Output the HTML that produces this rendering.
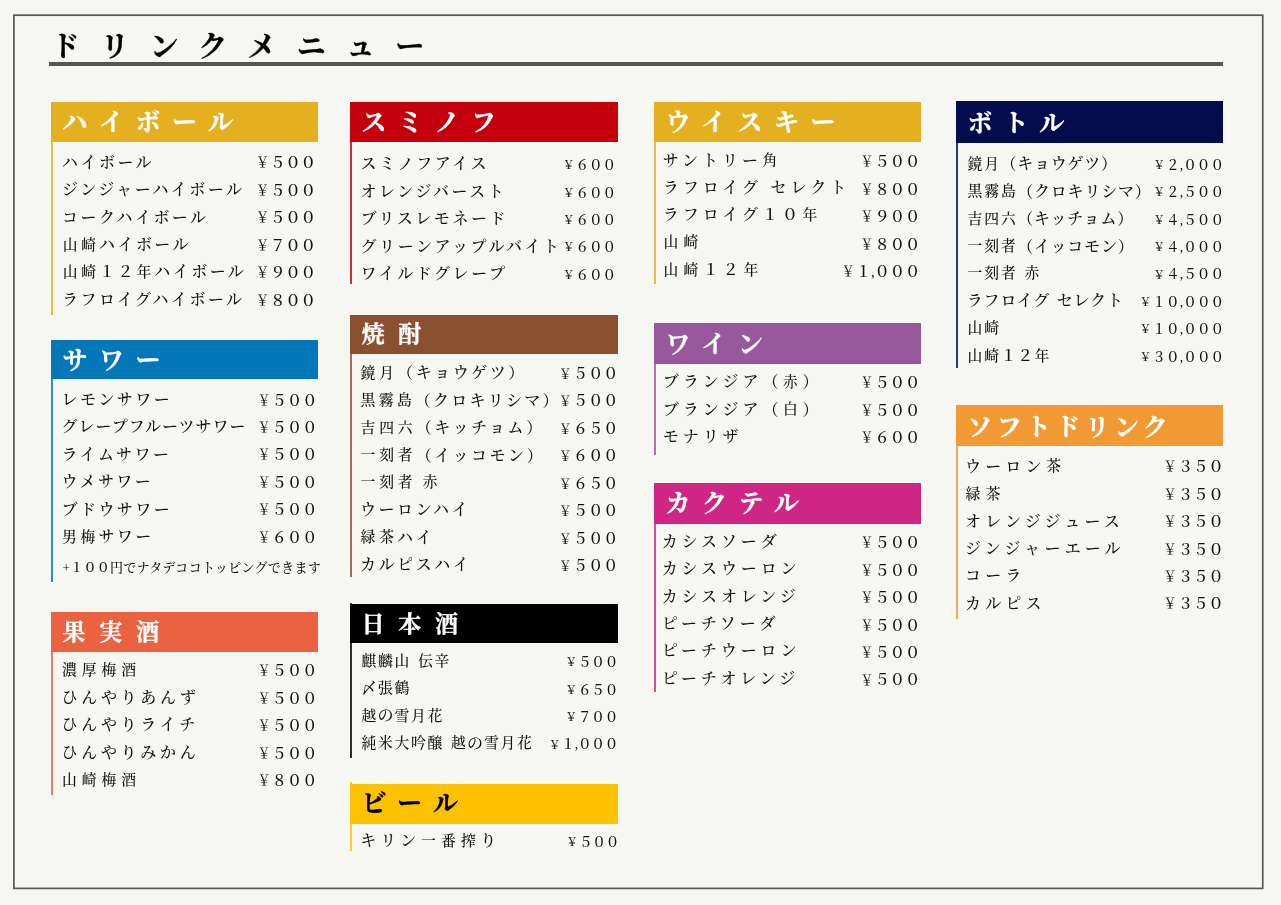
<!DOCTYPE html>
<html lang="ja"><head><meta charset="utf-8"><title>ドリンクメニュー</title>
<style>
html,body{margin:0;padding:0;}
body{width:1281px;height:905px;background:#f6f6f2;position:relative;overflow:hidden;font-family:"Liberation Serif", "Noto Serif CJK JP", "Noto Serif CJK SC", serif;color:#111;}
.frame{position:absolute;left:0;top:0;}
.title{position:absolute;left:51px;top:25px;font-size:29px;font-weight:700;letter-spacing:20.3px;line-height:44px;white-space:nowrap;color:#000;-webkit-text-stroke:0.3px #000;will-change:transform;}
.bar{position:absolute;left:48.5px;top:62px;width:1174.7px;height:4px;background:#575552;}
.sec{position:absolute;will-change:transform;}
.hd{position:absolute;left:0;top:0;color:#fff;font-weight:700;-webkit-text-stroke:0.35px currentColor;white-space:nowrap;box-sizing:border-box;}
.hd span{position:relative;}
.lb{position:absolute;left:0;width:2px;opacity:.82;}
.r{position:absolute;left:0;height:24px;line-height:24px;white-space:nowrap;}
.n{position:absolute;top:0;font-weight:500;}
.p{position:absolute;top:0.7px;text-align:right;font-weight:500;}
.n b{font-weight:inherit;position:relative;top:-0.5px;}
.p i{font-style:normal;display:inline-block;font-size:0.87em;width:1.1494em;text-align:center;position:relative;top:-0.075em;}
.note{position:absolute;left:11.5px;font-size:13px;letter-spacing:0.3px;white-space:nowrap;line-height:20px;font-weight:500;}
</style></head><body>
<svg class="frame" width="1281" height="905" viewBox="0 0 1281 905"><rect x="13.9" y="15.2" width="1248.85" height="873.2" fill="none" stroke="#5a5856" stroke-width="1.7"/></svg>
<div class="title">ドリンクメニュー</div>
<div class="bar"></div>

<div class="sec" style="left:51px;top:102px;width:267px;">
<div class="lb" style="top:0px;height:212.5px;background:#e5b020;"></div>
<div class="hd" style="width:267px;height:40px;line-height:40.0px;background:#e5b020;font-size:25px;letter-spacing:11.5px;padding-left:11.5px;"><span style="top:0.80px">ハイボール</span></div>
<div class="r" style="top:48.80px;width:267px;"><span class="n" style="left:11.1px;font-size:16px;letter-spacing:2.45px;">ハイボール</span><span class="p" style="top:0.70px;right:2.34px;font-size:15.6px;letter-spacing:-0.4px;"><i>￥</i>５００</span></div>
<div class="r" style="top:76.22px;width:267px;"><span class="n" style="left:11.1px;font-size:16px;letter-spacing:2.45px;">ジンジャーハイボール</span><span class="p" style="top:0.70px;right:2.34px;font-size:15.6px;letter-spacing:-0.4px;"><i>￥</i>５００</span></div>
<div class="r" style="top:103.64px;width:267px;"><span class="n" style="left:11.1px;font-size:16px;letter-spacing:2.45px;">コークハイボール</span><span class="p" style="top:0.70px;right:2.34px;font-size:15.6px;letter-spacing:-0.4px;"><i>￥</i>５００</span></div>
<div class="r" style="top:131.06px;width:267px;"><span class="n" style="left:11.1px;font-size:16px;letter-spacing:2.45px;"><b style="font-size:14.8px;letter-spacing:3.65px;margin:0 -0.60px 0 0.60px">山崎</b>ハイボール</span><span class="p" style="top:0.70px;right:2.34px;font-size:15.6px;letter-spacing:-0.4px;"><i>￥</i>７００</span></div>
<div class="r" style="top:158.48px;width:267px;"><span class="n" style="left:11.1px;font-size:16px;letter-spacing:2.45px;"><b style="font-size:14.8px;letter-spacing:3.65px;margin:0 -0.60px 0 0.60px">山崎</b>１２<b style="font-size:14.8px;letter-spacing:3.65px;margin:0 -0.60px 0 0.60px">年</b>ハイボール</span><span class="p" style="top:0.70px;right:2.34px;font-size:15.6px;letter-spacing:-0.4px;"><i>￥</i>９００</span></div>
<div class="r" style="top:185.90px;width:267px;"><span class="n" style="left:11.1px;font-size:16px;letter-spacing:2.45px;">ラフロイグハイボール</span><span class="p" style="top:0.70px;right:2.34px;font-size:15.6px;letter-spacing:-0.4px;"><i>￥</i>８００</span></div>
</div>
<div class="sec" style="left:51px;top:340px;width:267px;">
<div class="lb" style="top:0px;height:241.5px;background:#0477b8;"></div>
<div class="hd" style="width:267px;height:39px;line-height:39.0px;background:#0477b8;font-size:25px;letter-spacing:11.5px;padding-left:11.5px;"><span style="top:0.80px">サワー</span></div>
<div class="r" style="top:48.00px;width:267px;"><span class="n" style="left:10.5px;font-size:16px;letter-spacing:2.45px;">レモンサワー</span><span class="p" style="top:0.55px;right:0.63px;font-size:15.1px;letter-spacing:0.1px;"><i>￥</i>５００</span></div>
<div class="r" style="top:75.42px;width:267px;"><span class="n" style="left:10.5px;font-size:16px;letter-spacing:1.0px;">グレープフルーツサワー</span><span class="p" style="top:0.55px;right:0.63px;font-size:15.1px;letter-spacing:0.1px;"><i>￥</i>５００</span></div>
<div class="r" style="top:102.84px;width:267px;"><span class="n" style="left:10.5px;font-size:16px;letter-spacing:2.45px;">ライムサワー</span><span class="p" style="top:0.55px;right:0.63px;font-size:15.1px;letter-spacing:0.1px;"><i>￥</i>５００</span></div>
<div class="r" style="top:130.26px;width:267px;"><span class="n" style="left:10.5px;font-size:16px;letter-spacing:2.45px;">ウメサワー</span><span class="p" style="top:0.55px;right:0.63px;font-size:15.1px;letter-spacing:0.1px;"><i>￥</i>５００</span></div>
<div class="r" style="top:157.68px;width:267px;"><span class="n" style="left:10.5px;font-size:16px;letter-spacing:2.45px;">ブドウサワー</span><span class="p" style="top:0.55px;right:0.63px;font-size:15.1px;letter-spacing:0.1px;"><i>￥</i>５００</span></div>
<div class="r" style="top:185.10px;width:267px;"><span class="n" style="left:10.5px;font-size:16px;letter-spacing:2.45px;"><b style="font-size:14.8px;letter-spacing:3.65px;margin:0 -0.60px 0 0.60px">男梅</b>サワー</span><span class="p" style="top:0.55px;right:0.63px;font-size:15.1px;letter-spacing:0.1px;"><i>￥</i>６００</span></div>
<div class="note" style="top:218.1px;">+１００円でナタデココトッピングできます</div>
</div>
<div class="sec" style="left:51px;top:612.4px;width:267px;">
<div class="lb" style="top:0px;height:183.1px;background:#ea6240;"></div>
<div class="hd" style="width:267px;height:39.5px;line-height:39.5px;background:#ea6240;font-size:23px;letter-spacing:13.7px;padding-left:11.5px;"><span style="top:0.80px">果実酒</span></div>
<div class="r" style="top:46.50px;width:267px;"><span class="n" style="left:10.5px;font-size:16px;letter-spacing:3.7px;"><b style="font-size:14.8px;letter-spacing:4.90px;margin:0 -0.60px 0 0.60px">濃厚梅酒</b></span><span class="p" style="top:0.90px;right:0.63px;font-size:15.1px;letter-spacing:0.1px;"><i>￥</i>５００</span></div>
<div class="r" style="top:73.92px;width:267px;"><span class="n" style="left:10.5px;font-size:16px;letter-spacing:3.7px;">ひんやりあんず</span><span class="p" style="top:0.90px;right:0.63px;font-size:15.1px;letter-spacing:0.1px;"><i>￥</i>５００</span></div>
<div class="r" style="top:101.34px;width:267px;"><span class="n" style="left:10.5px;font-size:16px;letter-spacing:3.7px;">ひんやりライチ</span><span class="p" style="top:0.90px;right:0.63px;font-size:15.1px;letter-spacing:0.1px;"><i>￥</i>５００</span></div>
<div class="r" style="top:128.76px;width:267px;"><span class="n" style="left:10.5px;font-size:16px;letter-spacing:3.7px;">ひんやりみかん</span><span class="p" style="top:0.90px;right:0.63px;font-size:15.1px;letter-spacing:0.1px;"><i>￥</i>５００</span></div>
<div class="r" style="top:156.18px;width:267px;"><span class="n" style="left:10.5px;font-size:16px;letter-spacing:3.7px;"><b style="font-size:14.8px;letter-spacing:4.90px;margin:0 -0.60px 0 0.60px">山崎梅酒</b></span><span class="p" style="top:0.90px;right:0.63px;font-size:15.1px;letter-spacing:0.1px;"><i>￥</i>８００</span></div>
</div>
<div class="sec" style="left:350px;top:102px;width:268px;">
<div class="lb" style="top:0px;height:182.4px;background:#c5000c;"></div>
<div class="hd" style="width:268px;height:40px;line-height:40.0px;background:#c5000c;font-size:25px;letter-spacing:11.5px;padding-left:11.5px;"><span style="top:0.80px">スミノフ</span></div>
<div class="r" style="top:50.40px;width:268px;"><span class="n" style="left:10.5px;font-size:16px;letter-spacing:2.58px;">スミノフアイス</span><span class="p" style="top:1.70px;right:1.82px;font-size:13.6px;letter-spacing:0px;"><i>￥</i>６００</span></div>
<div class="r" style="top:77.82px;width:268px;"><span class="n" style="left:10.5px;font-size:16px;letter-spacing:2.58px;">オレンジバースト</span><span class="p" style="top:1.70px;right:1.82px;font-size:13.6px;letter-spacing:0px;"><i>￥</i>６００</span></div>
<div class="r" style="top:105.24px;width:268px;"><span class="n" style="left:10.5px;font-size:16px;letter-spacing:2.58px;">ブリスレモネード</span><span class="p" style="top:1.70px;right:1.82px;font-size:13.6px;letter-spacing:0px;"><i>￥</i>６００</span></div>
<div class="r" style="top:132.66px;width:268px;"><span class="n" style="left:10.5px;font-size:16px;letter-spacing:2.58px;">グリーンアップルバイト</span><span class="p" style="top:1.70px;right:1.82px;font-size:13.6px;letter-spacing:0px;"><i>￥</i>６００</span></div>
<div class="r" style="top:160.08px;width:268px;"><span class="n" style="left:10.5px;font-size:16px;letter-spacing:2.58px;">ワイルドグレープ</span><span class="p" style="top:1.70px;right:1.82px;font-size:13.6px;letter-spacing:0px;"><i>￥</i>６００</span></div>
</div>
<div class="sec" style="left:350px;top:314.5px;width:268px;">
<div class="lb" style="top:0px;height:261.7px;background:#8b5030;"></div>
<div class="hd" style="width:268px;height:39.2px;line-height:39.2px;background:#8b5030;font-size:23px;letter-spacing:13.7px;padding-left:11.5px;"><span style="top:0.10px">焼酎</span></div>
<div class="r" style="top:46.30px;width:268px;"><span class="n" style="left:10px;font-size:16px;letter-spacing:2.55px;"><b style="font-size:14.8px;letter-spacing:3.75px;margin:0 -0.60px 0 0.60px">鏡月</b>（キョウゲツ）</span><span class="p" style="top:0.70px;right:-0.55px;font-size:15.0px;letter-spacing:0.2px;"><i>￥</i>５００</span></div>
<div class="r" style="top:73.72px;width:268px;"><span class="n" style="left:10px;font-size:16px;letter-spacing:2.25px;"><b style="font-size:14.8px;letter-spacing:3.45px;margin:0 -0.60px 0 0.60px">黒霧島</b>（クロキリシマ）</span><span class="p" style="top:0.70px;right:-0.55px;font-size:15.0px;letter-spacing:0.2px;"><i>￥</i>５００</span></div>
<div class="r" style="top:101.14px;width:268px;"><span class="n" style="left:10px;font-size:16px;letter-spacing:2.55px;"><b style="font-size:14.8px;letter-spacing:3.75px;margin:0 -0.60px 0 0.60px">吉四六</b>（キッチョム）</span><span class="p" style="top:0.70px;right:-0.55px;font-size:15.0px;letter-spacing:0.2px;"><i>￥</i>６５０</span></div>
<div class="r" style="top:128.56px;width:268px;"><span class="n" style="left:10px;font-size:16px;letter-spacing:2.55px;"><b style="font-size:14.8px;letter-spacing:3.75px;margin:0 -0.60px 0 0.60px">一刻者</b>（イッコモン）</span><span class="p" style="top:0.70px;right:-0.55px;font-size:15.0px;letter-spacing:0.2px;"><i>￥</i>６００</span></div>
<div class="r" style="top:155.98px;width:268px;"><span class="n" style="left:10px;font-size:16px;letter-spacing:2.55px;"><b style="font-size:14.8px;letter-spacing:3.75px;margin:0 -0.60px 0 0.60px">一刻者</b> <b style="font-size:14.8px;letter-spacing:3.75px;margin:0 -0.60px 0 0.60px">赤</b></span><span class="p" style="top:0.70px;right:-0.55px;font-size:15.0px;letter-spacing:0.2px;"><i>￥</i>６５０</span></div>
<div class="r" style="top:183.40px;width:268px;"><span class="n" style="left:10px;font-size:16px;letter-spacing:2.55px;">ウーロンハイ</span><span class="p" style="top:0.70px;right:-0.55px;font-size:15.0px;letter-spacing:0.2px;"><i>￥</i>５００</span></div>
<div class="r" style="top:210.82px;width:268px;"><span class="n" style="left:10px;font-size:16px;letter-spacing:2.55px;"><b style="font-size:14.8px;letter-spacing:3.75px;margin:0 -0.60px 0 0.60px">緑茶</b>ハイ</span><span class="p" style="top:0.70px;right:-0.55px;font-size:15.0px;letter-spacing:0.2px;"><i>￥</i>５００</span></div>
<div class="r" style="top:238.24px;width:268px;"><span class="n" style="left:10px;font-size:16px;letter-spacing:2.55px;">カルピスハイ</span><span class="p" style="top:0.70px;right:-0.55px;font-size:15.0px;letter-spacing:0.2px;"><i>￥</i>５００</span></div>
</div>
<div class="sec" style="left:350px;top:603.5px;width:268px;">
<div class="lb" style="top:-1.5px;height:155.7px;background:#000000;"></div>
<div class="hd" style="width:268px;height:39px;line-height:39.0px;background:#000000;font-size:23px;letter-spacing:13.7px;padding-left:11.5px;"><span style="top:0.80px">日本酒</span></div>
<div class="r" style="top:45.40px;width:268px;"><span class="n" style="left:11px;font-size:16px;letter-spacing:0.5px;word-spacing:2.5px;"><b style="font-size:14.8px;letter-spacing:1.70px;margin:0 -0.60px 0 0.60px">麒麟山</b> <b style="font-size:14.8px;letter-spacing:1.70px;margin:0 -0.60px 0 0.60px">伝辛</b></span><span class="p" style="top:1.80px;right:-0.08px;font-size:13.6px;letter-spacing:-0.2px;"><i>￥</i>５００</span></div>
<div class="r" style="top:72.82px;width:268px;"><span class="n" style="left:11px;font-size:16px;letter-spacing:0.5px;"><b style="font-size:14.8px;letter-spacing:1.70px;margin:0 -0.60px 0 0.60px">〆張鶴</b></span><span class="p" style="top:1.80px;right:-0.08px;font-size:13.6px;letter-spacing:-0.2px;"><i>￥</i>６５０</span></div>
<div class="r" style="top:100.24px;width:268px;"><span class="n" style="left:11px;font-size:16px;letter-spacing:0.5px;"><b style="font-size:14.8px;letter-spacing:1.70px;margin:0 -0.60px 0 0.60px">越</b>の<b style="font-size:14.8px;letter-spacing:1.70px;margin:0 -0.60px 0 0.60px">雪月花</b></span><span class="p" style="top:1.80px;right:-0.08px;font-size:13.6px;letter-spacing:-0.2px;"><i>￥</i>７００</span></div>
<div class="r" style="top:127.66px;width:268px;"><span class="n" style="left:11px;font-size:16px;letter-spacing:0.5px;word-spacing:2.5px;"><b style="font-size:14.8px;letter-spacing:1.70px;margin:0 -0.60px 0 0.60px">純米大吟醸</b> <b style="font-size:14.8px;letter-spacing:1.70px;margin:0 -0.60px 0 0.60px">越</b>の<b style="font-size:14.8px;letter-spacing:1.70px;margin:0 -0.60px 0 0.60px">雪月花</b></span><span class="p" style="top:1.80px;right:-0.08px;font-size:13.6px;letter-spacing:-0.2px;"><i>￥</i>１,０００</span></div>
</div>
<div class="sec" style="left:350px;top:784.4px;width:268px;">
<div class="lb" style="top:-2.2px;height:69.2px;background:#fcc200;"></div>
<div class="hd" style="width:268px;height:39.5px;line-height:39.5px;background:#fcc200;font-size:25px;letter-spacing:11.5px;padding-left:11.5px;color:#000;"><span style="top:0.30px">ビール</span></div>
<div class="r" style="top:45.00px;width:268px;"><span class="n" style="left:10.3px;font-size:16px;letter-spacing:4.0px;">キリン<b style="font-size:14.8px;letter-spacing:5.20px;margin:0 -0.60px 0 0.60px">一番搾</b>り</span><span class="p" style="top:1.85px;right:-1.08px;font-size:13.6px;letter-spacing:-0.2px;"><i>￥</i>５００</span></div>
</div>
<div class="sec" style="left:653.5px;top:102px;width:267.2px;">
<div class="lb" style="top:0px;height:182.4px;background:#e5b020;"></div>
<div class="hd" style="width:267.2px;height:40px;line-height:40.0px;background:#e5b020;font-size:25px;letter-spacing:11.5px;padding-left:11.5px;"><span style="top:0.80px">ウイスキー</span></div>
<div class="r" style="top:46.60px;width:267.2px;"><span class="n" style="left:8.8px;font-size:16px;letter-spacing:4.0px;">サントリー<b style="font-size:14.8px;letter-spacing:5.20px;margin:0 -0.60px 0 0.60px">角</b></span><span class="p" style="top:1.70px;right:0.99px;font-size:15.3px;letter-spacing:-0.1px;"><i>￥</i>５００</span></div>
<div class="r" style="top:74.02px;width:267.2px;"><span class="n" style="left:8.8px;font-size:16px;letter-spacing:4.0px;word-spacing:0.5px;">ラフロイグ セレクト</span><span class="p" style="top:1.70px;right:0.99px;font-size:15.3px;letter-spacing:-0.1px;"><i>￥</i>８００</span></div>
<div class="r" style="top:101.44px;width:267.2px;"><span class="n" style="left:8.8px;font-size:16px;letter-spacing:4.0px;">ラフロイグ１０<b style="font-size:14.8px;letter-spacing:5.20px;margin:0 -0.60px 0 0.60px">年</b></span><span class="p" style="top:1.70px;right:0.99px;font-size:15.3px;letter-spacing:-0.1px;"><i>￥</i>９００</span></div>
<div class="r" style="top:128.86px;width:267.2px;"><span class="n" style="left:8.8px;font-size:16px;letter-spacing:4.0px;"><b style="font-size:14.8px;letter-spacing:5.20px;margin:0 -0.60px 0 0.60px">山崎</b></span><span class="p" style="top:1.70px;right:0.99px;font-size:15.3px;letter-spacing:-0.1px;"><i>￥</i>８００</span></div>
<div class="r" style="top:156.28px;width:267.2px;"><span class="n" style="left:8.8px;font-size:16px;letter-spacing:4.0px;"><b style="font-size:14.8px;letter-spacing:5.20px;margin:0 -0.60px 0 0.60px">山崎</b>１２<b style="font-size:14.8px;letter-spacing:5.20px;margin:0 -0.60px 0 0.60px">年</b></span><span class="p" style="top:1.70px;right:0.99px;font-size:15.3px;letter-spacing:-0.1px;"><i>￥</i>１,０００</span></div>
</div>
<div class="sec" style="left:653.5px;top:323px;width:267.2px;">
<div class="lb" style="top:0px;height:131.9px;background:#97589c;"></div>
<div class="hd" style="width:267.2px;height:41.2px;line-height:41.2px;background:#97589c;font-size:25px;letter-spacing:11.5px;padding-left:11.5px;"><span style="top:0.80px">ワイン</span></div>
<div class="r" style="top:47.20px;width:267.2px;"><span class="n" style="left:8.8px;font-size:16px;letter-spacing:4.0px;">ブランジア（<b style="font-size:14.8px;letter-spacing:5.20px;margin:0 -0.60px 0 0.60px">赤</b>）</span><span class="p" style="top:1.10px;right:0.99px;font-size:15.3px;letter-spacing:-0.1px;"><i>￥</i>５００</span></div>
<div class="r" style="top:74.62px;width:267.2px;"><span class="n" style="left:8.8px;font-size:16px;letter-spacing:4.0px;">ブランジア（<b style="font-size:14.8px;letter-spacing:5.20px;margin:0 -0.60px 0 0.60px">白</b>）</span><span class="p" style="top:1.10px;right:0.99px;font-size:15.3px;letter-spacing:-0.1px;"><i>￥</i>５００</span></div>
<div class="r" style="top:102.04px;width:267.2px;"><span class="n" style="left:8.8px;font-size:16px;letter-spacing:4.0px;">モナリザ</span><span class="p" style="top:1.10px;right:0.99px;font-size:15.3px;letter-spacing:-0.1px;"><i>￥</i>６００</span></div>
</div>
<div class="sec" style="left:653.5px;top:483px;width:267.2px;">
<div class="lb" style="top:0px;height:208.8px;background:#cf2585;"></div>
<div class="hd" style="width:267.2px;height:40.7px;line-height:40.7px;background:#cf2585;font-size:25px;letter-spacing:11.5px;padding-left:11.5px;"><span style="top:1.40px">カクテル</span></div>
<div class="r" style="top:46.70px;width:267.2px;"><span class="n" style="left:7.7px;font-size:16px;letter-spacing:3.9px;">カシスソーダ</span><span class="p" style="top:1.70px;right:0.99px;font-size:15.3px;letter-spacing:-0.1px;"><i>￥</i>５００</span></div>
<div class="r" style="top:74.12px;width:267.2px;"><span class="n" style="left:7.7px;font-size:16px;letter-spacing:3.9px;">カシスウーロン</span><span class="p" style="top:1.70px;right:0.99px;font-size:15.3px;letter-spacing:-0.1px;"><i>￥</i>５００</span></div>
<div class="r" style="top:101.54px;width:267.2px;"><span class="n" style="left:7.7px;font-size:16px;letter-spacing:3.9px;">カシスオレンジ</span><span class="p" style="top:1.70px;right:0.99px;font-size:15.3px;letter-spacing:-0.1px;"><i>￥</i>５００</span></div>
<div class="r" style="top:128.96px;width:267.2px;"><span class="n" style="left:7.7px;font-size:16px;letter-spacing:3.9px;">ピーチソーダ</span><span class="p" style="top:1.70px;right:0.99px;font-size:15.3px;letter-spacing:-0.1px;"><i>￥</i>５００</span></div>
<div class="r" style="top:156.38px;width:267.2px;"><span class="n" style="left:7.7px;font-size:16px;letter-spacing:3.9px;">ピーチウーロン</span><span class="p" style="top:1.70px;right:0.99px;font-size:15.3px;letter-spacing:-0.1px;"><i>￥</i>５００</span></div>
<div class="r" style="top:183.80px;width:267.2px;"><span class="n" style="left:7.7px;font-size:16px;letter-spacing:3.9px;">ピーチオレンジ</span><span class="p" style="top:1.70px;right:0.99px;font-size:15.3px;letter-spacing:-0.1px;"><i>￥</i>５００</span></div>
</div>
<div class="sec" style="left:956.2px;top:101.2px;width:266.8px;">
<div class="lb" style="top:0px;height:266.7px;background:#030d4d;"></div>
<div class="hd" style="width:266.8px;height:41.8px;line-height:41.8px;background:#030d4d;font-size:25px;letter-spacing:10.9px;padding-left:11.5px;"><span style="top:2.00px">ボトル</span></div>
<div class="r" style="top:51.30px;width:266.8px;"><span class="n" style="left:10.8px;font-size:16px;letter-spacing:0.8px;"><b style="font-size:14.8px;letter-spacing:2.00px;margin:0 -0.60px 0 0.60px">鏡月</b>（キョウゲツ）</span><span class="p" style="top:1.45px;right:-1.48px;font-size:13.6px;letter-spacing:0.1px;"><i>￥</i>２,０００</span></div>
<div class="r" style="top:78.72px;width:266.8px;"><span class="n" style="left:10.8px;font-size:16px;letter-spacing:0.8px;"><b style="font-size:14.8px;letter-spacing:2.00px;margin:0 -0.60px 0 0.60px">黒霧島</b>（クロキリシマ）</span><span class="p" style="top:1.45px;right:-1.48px;font-size:13.6px;letter-spacing:0.1px;"><i>￥</i>２,５００</span></div>
<div class="r" style="top:106.14px;width:266.8px;"><span class="n" style="left:10.8px;font-size:16px;letter-spacing:0.8px;"><b style="font-size:14.8px;letter-spacing:2.00px;margin:0 -0.60px 0 0.60px">吉四六</b>（キッチョム）</span><span class="p" style="top:1.45px;right:-1.48px;font-size:13.6px;letter-spacing:0.1px;"><i>￥</i>４,５００</span></div>
<div class="r" style="top:133.56px;width:266.8px;"><span class="n" style="left:10.8px;font-size:16px;letter-spacing:0.8px;"><b style="font-size:14.8px;letter-spacing:2.00px;margin:0 -0.60px 0 0.60px">一刻者</b>（イッコモン）</span><span class="p" style="top:1.45px;right:-1.48px;font-size:13.6px;letter-spacing:0.1px;"><i>￥</i>４,０００</span></div>
<div class="r" style="top:160.98px;width:266.8px;"><span class="n" style="left:10.8px;font-size:16px;letter-spacing:0.8px;word-spacing:2px;"><b style="font-size:14.8px;letter-spacing:2.00px;margin:0 -0.60px 0 0.60px">一刻者</b> <b style="font-size:14.8px;letter-spacing:2.00px;margin:0 -0.60px 0 0.60px">赤</b></span><span class="p" style="top:1.45px;right:-1.48px;font-size:13.6px;letter-spacing:0.1px;"><i>￥</i>４,５００</span></div>
<div class="r" style="top:188.40px;width:266.8px;"><span class="n" style="left:10.8px;font-size:16px;letter-spacing:0.8px;word-spacing:2px;">ラフロイグ セレクト</span><span class="p" style="top:1.45px;right:-1.48px;font-size:13.6px;letter-spacing:0.1px;"><i>￥</i>１０,０００</span></div>
<div class="r" style="top:215.82px;width:266.8px;"><span class="n" style="left:10.8px;font-size:16px;letter-spacing:0.8px;"><b style="font-size:14.8px;letter-spacing:2.00px;margin:0 -0.60px 0 0.60px">山崎</b></span><span class="p" style="top:1.45px;right:-1.48px;font-size:13.6px;letter-spacing:0.1px;"><i>￥</i>１０,０００</span></div>
<div class="r" style="top:243.24px;width:266.8px;"><span class="n" style="left:10.8px;font-size:16px;letter-spacing:0.8px;"><b style="font-size:14.8px;letter-spacing:2.00px;margin:0 -0.60px 0 0.60px">山崎</b>１２<b style="font-size:14.8px;letter-spacing:2.00px;margin:0 -0.60px 0 0.60px">年</b></span><span class="p" style="top:1.45px;right:-1.48px;font-size:13.6px;letter-spacing:0.1px;"><i>￥</i>３０,０００</span></div>
</div>
<div class="sec" style="left:956.2px;top:405.4px;width:266.8px;">
<div class="lb" style="top:0px;height:214.0px;background:#f19a33;"></div>
<div class="hd" style="width:266.8px;height:41px;line-height:41.0px;background:#f19a33;font-size:25px;letter-spacing:4.3px;padding-left:11.5px;"><span style="top:1.80px">ソフトドリンク</span></div>
<div class="r" style="top:49.70px;width:266.8px;"><span class="n" style="left:9px;font-size:16px;letter-spacing:4.15px;">ウーロン<b style="font-size:14.8px;letter-spacing:5.35px;margin:0 -0.60px 0 0.60px">茶</b></span><span class="p" style="top:0.70px;right:-0.56px;font-size:15.6px;letter-spacing:-0.4px;"><i>￥</i>３５０</span></div>
<div class="r" style="top:77.12px;width:266.8px;"><span class="n" style="left:9px;font-size:16px;letter-spacing:4.15px;"><b style="font-size:14.8px;letter-spacing:5.35px;margin:0 -0.60px 0 0.60px">緑茶</b></span><span class="p" style="top:0.70px;right:-0.56px;font-size:15.6px;letter-spacing:-0.4px;"><i>￥</i>３５０</span></div>
<div class="r" style="top:104.54px;width:266.8px;"><span class="n" style="left:9px;font-size:16px;letter-spacing:4.15px;">オレンジジュース</span><span class="p" style="top:0.70px;right:-0.56px;font-size:15.6px;letter-spacing:-0.4px;"><i>￥</i>３５０</span></div>
<div class="r" style="top:131.96px;width:266.8px;"><span class="n" style="left:9px;font-size:16px;letter-spacing:4.15px;">ジンジャーエール</span><span class="p" style="top:0.70px;right:-0.56px;font-size:15.6px;letter-spacing:-0.4px;"><i>￥</i>３５０</span></div>
<div class="r" style="top:159.38px;width:266.8px;"><span class="n" style="left:9px;font-size:16px;letter-spacing:4.15px;">コーラ</span><span class="p" style="top:0.70px;right:-0.56px;font-size:15.6px;letter-spacing:-0.4px;"><i>￥</i>３５０</span></div>
<div class="r" style="top:186.80px;width:266.8px;"><span class="n" style="left:9px;font-size:16px;letter-spacing:4.15px;">カルピス</span><span class="p" style="top:0.70px;right:-0.56px;font-size:15.6px;letter-spacing:-0.4px;"><i>￥</i>３５０</span></div>
</div>
</body></html>
